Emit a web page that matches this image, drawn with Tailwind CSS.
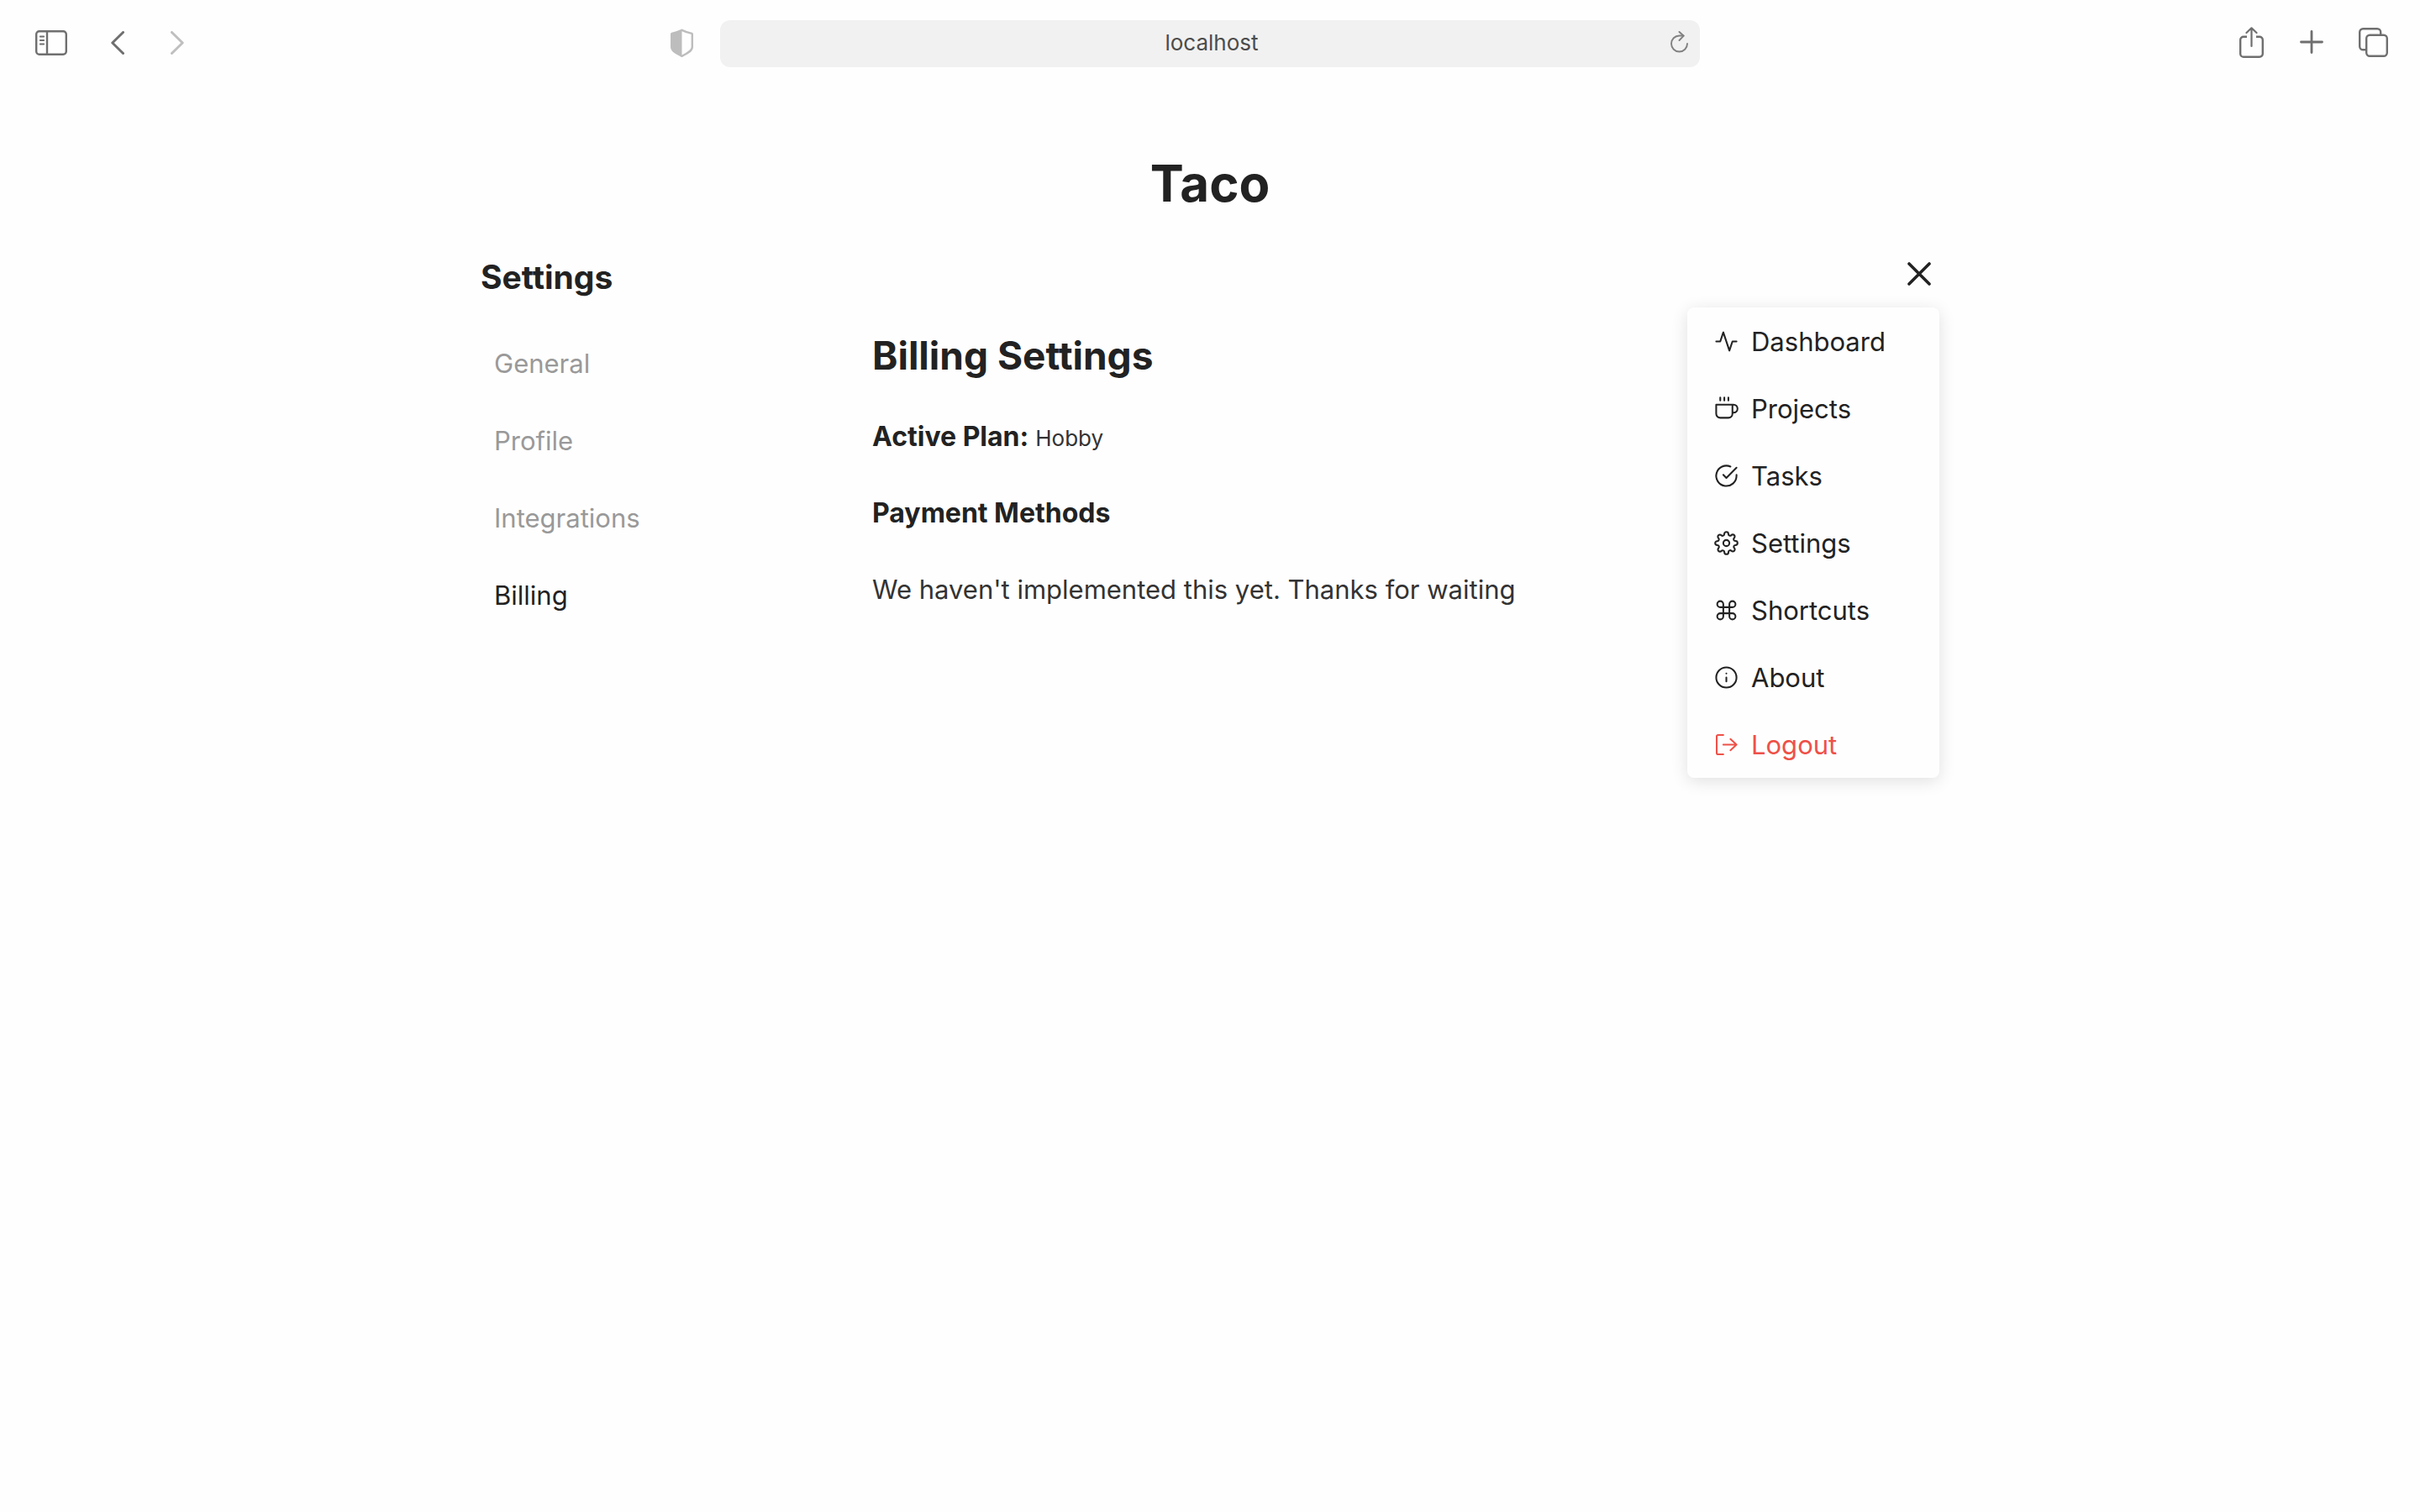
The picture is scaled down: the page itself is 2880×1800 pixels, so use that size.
<!DOCTYPE html>
<html lang="en">
<head>
<meta charset="utf-8">
<title>Taco - Billing Settings</title>
<script src="https://cdn.jsdelivr.net/npm/@tailwindcss/browser@4"></script>
</head>
<body class="min-h-screen bg-[#fefefe] font-['Inter','Liberation_Sans',sans-serif] text-[31px] text-[#222]">

<!-- Browser toolbar -->
<header class="grid h-[104px] grid-cols-[1fr_40.5%_1fr] items-center text-[#6f6f6f]">
  <div class="flex items-center pr-[32px] pb-0.5 pl-[42px]">
    <button type="button" aria-label="Show sidebar">
      <svg class="block" width="38" height="30" viewBox="0 0 38 30" fill="none" stroke="currentColor" stroke-width="2.4"><rect x="1.2" y="1.2" width="35.6" height="27.6" rx="3.5"/><path d="M14 1v28"/><path d="M5.8 7.5h4.4M5.8 12h4.4M5.8 16.500h4.400" stroke-width="1.8" stroke-linecap="round"/></svg>
    </button>
    <button type="button" aria-label="Back" class="ml-[52px]">
      <svg class="block" width="16" height="28" viewBox="0 0 16 28" fill="none" stroke="currentColor" stroke-width="3" stroke-linecap="round" stroke-linejoin="round"><path d="M14.500 1.500L1.800 14l12.700 12.500"/></svg>
    </button>
    <button type="button" aria-label="Forward" class="ml-[55px] text-[#bfbfbf]">
      <svg class="block" width="16" height="28" viewBox="0 0 16 28" fill="none" stroke="currentColor" stroke-width="3" stroke-linecap="round" stroke-linejoin="round"><path d="M1.500 1.500L14.200 14 1.500 26.500"/></svg>
    </button>
    <button type="button" aria-label="Privacy report" class="ml-auto text-[#bdbdbd]">
      <svg class="block" width="27" height="34" viewBox="0 0 27 34" fill="none" stroke="currentColor" stroke-width="2.400" stroke-linejoin="round"><path d="M13.500 1.800C17 3.500 21 4.900 25.300 5.900a1 1 0 0 1 .5 .8V22c0 4.500-5.500 7.500-12.300 10.800C6.700 29.500 1.200 26.500 1.200 22V6.700a1 1 0 0 1 .5-.8C6 4.900 10 3.500 13.500 1.800z"/><path d="M13.500 2v30.500C7 29.500 1.500 26.500 1.500 22V6.500z" fill="currentColor" stroke="none"/></svg>
    </button>
  </div>
  <div class="flex h-14 items-center rounded-xl bg-[#f1f1f1] pr-[14px] pb-0.5 pl-[39px]">
    <input type="text" aria-label="Address" value="localhost" class="min-w-0 flex-1 bg-transparent text-center text-[26px] leading-8 text-[#4c4c4c] outline-none">
    <button type="button" aria-label="Reload" class="pb-0.5 text-[#808080]">
      <svg class="block" width="21" height="26" viewBox="0 0 21 26" fill="none" stroke="currentColor" stroke-width="1.900" stroke-linecap="round" stroke-linejoin="round"><path d="M20 15a9.500 9.500 0 1 1-9.500-9.500h5"/><path d="M10.500 1l5.200 4.700-5.200 5.300"/></svg>
    </button>
  </div>
  <div class="flex items-center justify-end pr-[38px]">
    <button type="button" aria-label="Share" class="pb-1">
      <svg class="block" width="29" height="37" viewBox="0 0 29 37" fill="none" stroke="currentColor" stroke-width="2.400" stroke-linecap="round" stroke-linejoin="round"><path d="M9 11.700H5a3.800 3.800 0 0 0-3.800 3.800V32A3.800 3.800 0 0 0 5 35.800h19a3.800 3.800 0 0 0 3.800-3.800V15.500a3.800 3.800 0 0 0-3.800-3.800h-4" stroke-linecap="butt"/><path d="M14.500 23V1.500M8.500 7l6-5.700 6 5.700" stroke-width="2.200"/></svg>
    </button>
    <button type="button" aria-label="New tab" class="ml-[43px] pb-1">
      <svg class="block" width="28" height="28" viewBox="0 0 28 28" fill="none" stroke="currentColor" stroke-width="2.800" stroke-linecap="round"><path d="M14 1.500v25M1.500 14h25"/></svg>
    </button>
    <button type="button" aria-label="Show all tabs" class="ml-[42px] pb-1">
      <svg class="block" width="35" height="35" viewBox="0 0 35 35" fill="none" stroke="currentColor" stroke-width="2.400"><rect x="9.200" y="8.700" width="24.600" height="25" rx="4"/><path d="M9 26.200H5.200a4 4 0 0 1-4-4V5.200a4 4 0 0 1 4-4h17a4 4 0 0 1 4 4v3.500"/></svg>
    </button>
  </div>
</header>

<main class="mx-auto w-[1736px] max-w-full pt-[74px]">
  <h1 class="text-center text-[60px] leading-[80px] font-bold">Taco</h1>

  <div class="relative mt-[42px] flex items-start justify-between">
    <h2 class="text-[39px] leading-[60px] font-bold">Settings</h2>
    <button type="button" aria-label="Close menu" aria-expanded="true" class="flex h-[52px] items-center">
      <svg class="size-12" viewBox="0 0 24 24" fill="none" stroke="currentColor" stroke-width="1.800" stroke-linecap="round" stroke-linejoin="round"><path d="M18 6L6 18M6 6l12 12"/></svg>
    </button>

    <!-- Dropdown menu -->
    <nav aria-label="Main" class="absolute top-full right-0 mt-[6px] w-[300px] rounded-lg bg-[#fefefe] shadow-[0_4px_20px_rgba(0,0,0,0.12)]">
      <a href="#" class="flex h-20 items-center gap-[15px] pl-8">
        <svg class="size-[29px] shrink-0" viewBox="0 0 24 24" fill="none" stroke="currentColor" stroke-width="1.700" stroke-linecap="round" stroke-linejoin="round"><path d="M22 12h-4l-3 9L9 3l-3 9H2"/></svg>
        <span class="pt-0.5">Dashboard</span>
      </a>
      <a href="#" class="flex h-20 items-center gap-[15px] pl-8">
        <svg class="size-[29px] shrink-0" viewBox="0 0 24 24" fill="none" stroke="currentColor" stroke-width="1.700" stroke-linecap="round" stroke-linejoin="round"><path d="M18 8h1a4 4 0 0 1 0 8h-1M2 8h16v9a4 4 0 0 1-4 4H6a4 4 0 0 1-4-4V8zM6 1v3M10 1v3M14 1v3"/></svg>
        <span class="pt-0.5">Projects</span>
      </a>
      <a href="#" class="flex h-20 items-center gap-[15px] pl-8">
        <svg class="size-[29px] shrink-0" viewBox="0 0 24 24" fill="none" stroke="currentColor" stroke-width="1.700" stroke-linecap="round" stroke-linejoin="round"><path d="M22 11.080V12a10 10 0 1 1-5.930-9.140"/><path d="M22 4L12 14.010l-3-3"/></svg>
        <span class="pt-0.5">Tasks</span>
      </a>
      <a href="#" class="flex h-20 items-center gap-[15px] pl-8">
        <svg class="size-[29px] shrink-0" viewBox="0 0 24 24" fill="none" stroke="currentColor" stroke-width="1.700" stroke-linecap="round" stroke-linejoin="round"><circle cx="12" cy="12" r="3"/><path d="M19.400 15a1.650 1.650 0 0 0 .33 1.820l.06.06a2 2 0 0 1 0 2.830 2 2 0 0 1-2.830 0l-.06-.06a1.650 1.650 0 0 0-1.820-.33 1.650 1.650 0 0 0-1 1.510V21a2 2 0 0 1-2 2 2 2 0 0 1-2-2v-.09A1.650 1.650 0 0 0 9 19.400a1.650 1.650 0 0 0-1.820.33l-.06.06a2 2 0 0 1-2.830 0 2 2 0 0 1 0-2.830l.06-.06a1.650 1.650 0 0 0 .33-1.820 1.650 1.650 0 0 0-1.510-1H3a2 2 0 0 1-2-2 2 2 0 0 1 2-2h.09A1.650 1.650 0 0 0 4.600 9a1.650 1.650 0 0 0-.33-1.820l-.06-.06a2 2 0 0 1 0-2.830 2 2 0 0 1 2.830 0l.06.06a1.650 1.650 0 0 0 1.820.33H9a1.650 1.650 0 0 0 1-1.510V3a2 2 0 0 1 2-2 2 2 0 0 1 2 2v.09a1.650 1.650 0 0 0 1 1.510 1.650 1.650 0 0 0 1.820-.33l.06-.06a2 2 0 0 1 2.830 0 2 2 0 0 1 0 2.830l-.06.06a1.650 1.650 0 0 0-.33 1.820V9a1.650 1.650 0 0 0 1.510 1H21a2 2 0 0 1 2 2 2 2 0 0 1-2 2h-.09a1.650 1.650 0 0 0-1.510 1z"/></svg>
        <span class="pt-0.5">Settings</span>
      </a>
      <a href="#" class="flex h-20 items-center gap-[15px] pl-8">
        <svg class="size-[29px] shrink-0" viewBox="0 0 24 24" fill="none" stroke="currentColor" stroke-width="1.700" stroke-linecap="round" stroke-linejoin="round"><path d="M18 3a3 3 0 0 0-3 3v12a3 3 0 1 0 3-3H6a3 3 0 1 0 3 3V6a3 3 0 1 0-3 3h12a3 3 0 0 0 0-6z"/></svg>
        <span class="pt-0.5">Shortcuts</span>
      </a>
      <a href="#" class="flex h-20 items-center gap-[15px] pl-8">
        <svg class="size-[29px] shrink-0" viewBox="0 0 24 24" fill="none" stroke="currentColor" stroke-width="1.700" stroke-linecap="round" stroke-linejoin="round"><circle cx="12" cy="12" r="10"/><path d="M12 16v-4M12 8h.01"/></svg>
        <span class="pt-0.5">About</span>
      </a>
      <a href="#" class="flex h-20 items-center gap-[15px] pl-8 text-[#ee5148]">
        <svg class="size-[29px] shrink-0" viewBox="0 0 24 24" fill="none" stroke="currentColor" stroke-width="1.700" stroke-linecap="round" stroke-linejoin="round"><path d="M9 21.500H4a1.500 1.500 0 0 1-1.500-1.500V4A1.500 1.500 0 0 1 4 2.500h5M16 17.500l6-5.500-6-5.500M22 12H9"/></svg>
        <span class="pt-0.5">Logout</span>
      </a>
    </nav>
  </div>

  <div class="mt-[27px] grid grid-cols-[466px_1fr]">
    <nav aria-label="Settings" class="flex flex-col pl-4 leading-[92px] text-[#999]">
      <a href="#">General</a>
      <a href="#">Profile</a>
      <a href="#">Integrations</a>
      <a href="#" aria-current="page" class="text-[#222]">Billing</a>
    </nav>
    <section class="flex flex-col gap-[43px] pt-1.5 leading-[48px]">
      <h2 class="text-[46px] leading-[60px] font-bold">Billing Settings</h2>
      <p class="flex h-12 items-baseline gap-2"><strong class="text-[32px] font-bold">Active Plan:</strong> <span class="text-[26px] text-[#333]">Hobby</span></p>
      <h3 class="text-[32px] font-bold">Payment Methods</h3>
      <p class="text-[#333]">We haven't implemented this yet. Thanks for waiting</p>
    </section>
  </div>
</main>
</body>
</html>
